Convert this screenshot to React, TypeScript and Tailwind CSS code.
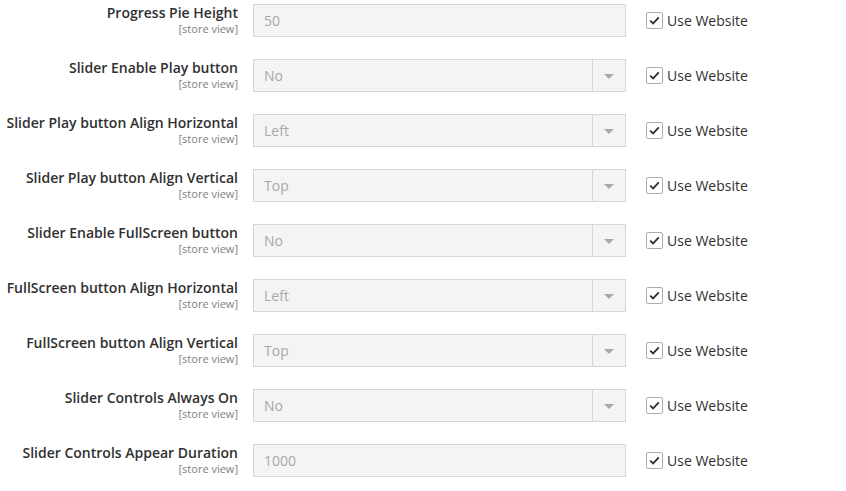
const rows = [
  { label: "Progress Pie Height", value: "50", select: false },
  { label: "Slider Enable Play button", value: "No", select: true },
  { label: "Slider Play button Align Horizontal", value: "Left", select: true },
  { label: "Slider Play button Align Vertical", value: "Top", select: true },
  { label: "Slider Enable FullScreen button", value: "No", select: true },
  { label: "FullScreen button Align Horizontal", value: "Left", select: true },
  { label: "FullScreen button Align Vertical", value: "Top", select: true },
  { label: "Slider Controls Always On", value: "No", select: true },
  { label: "Slider Controls Appear Duration", value: "1000", select: false },
];

function CheckBox() {
  return (
    <span className="flex h-[17px] w-[17px] items-center justify-center rounded-[2px] border border-[#adadad] bg-white">
      <svg width="11" height="9" viewBox="0 0 11 9" fill="none">
        <path d="M1.2 4.6 L4.1 7.4 L9.8 1.4" stroke="#303030" strokeWidth="1.8" />
      </svg>
    </span>
  );
}

function Field({ value, select }: { value: string; select: boolean }) {
  return (
    <div className="flex h-[33px] w-[373px] items-stretch border border-[#d6d6d6] bg-[#f4f4f4]">
      <div className="flex flex-1 items-center pl-[10px] text-[14px] text-[#a8a8a8]">{value}</div>
      {select && (
        <div className="flex w-[33px] items-center justify-center border-l border-[#d6d6d6]">
          <span className="mt-[1px] h-0 w-0 border-x-[5px] border-t-[5px] border-x-transparent border-t-[#a8a8a8]" />
        </div>
      )}
    </div>
  );
}

export default function App() {
  return (
    <div
      className="h-[491px] w-[846px] overflow-hidden bg-white pt-[3px]"
      style={{ fontFamily: '"Open Sans", sans-serif' }}
    >
      {rows.map((r) => (
        <div key={r.label} className="mb-[21px] flex items-start">
          <div className="w-[238px] text-right">
            <div className="text-[14px] font-semibold leading-[19px] text-[#303030]">{r.label}</div>
            <div className="text-[11px] leading-[14px] text-[#808080]">[store view]</div>
          </div>
          <div className="ml-[15px] mt-[1px]">
            <Field value={r.value} select={r.select} />
          </div>
          <label className="ml-[20px] mt-[1px] flex h-[33px] items-center gap-[4px] text-[14px] text-[#303030]">
            <CheckBox />
            <span>Use Website</span>
          </label>
        </div>
      ))}
    </div>
  );
}
